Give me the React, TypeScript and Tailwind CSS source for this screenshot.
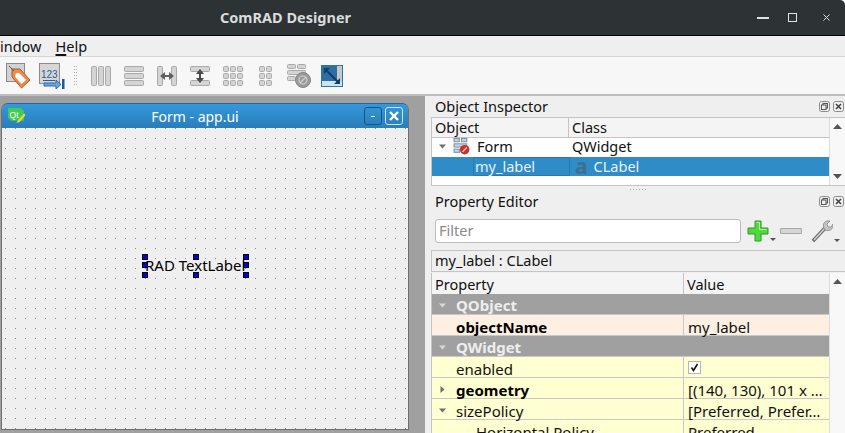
import type { ReactNode } from 'react';

const GREY = { fill: '#d4d4d4', stroke: '#a9a9a9' };

function Bar({ x, y, w, h }: { x: number; y: number; w: number; h: number }) {
  return <rect x={x + 0.5} y={y + 0.5} width={w - 1} height={h - 1} rx="1" fill={GREY.fill} stroke={GREY.stroke} />;
}

function Icon({ w = 24, h = 24, children }: { w?: number; h?: number; children: ReactNode }) {
  return (
    <svg width={w} height={h} viewBox={`0 0 ${w} ${h}`} className="block">
      {children}
    </svg>
  );
}

function TagIcon() {
  return (
    <Icon w={26} h={26}>
      <rect x="0.5" y="0.5" width="18" height="18" fill="#d2d2d2" stroke="#8a8a8a" />
      <path d="M6 6 L14 6 L24 17 L15.5 25 L6 14 Z" fill="#ee8a4a" stroke="#a85a2a" />
      <path d="M10 10 L13 10 L20 17 L15.5 21 L9 13.500 Z" fill="#fff" />
      <path d="M3 3 L8 8" stroke="#555" fill="none" />
    </Icon>
  );
}

function TabOrderIcon() {
  return (
    <Icon w={26} h={26}>
      <rect x="0.5" y="0.5" width="20" height="20" fill="#d6d6d6" stroke="#8c8c8c" />
      <text x="2" y="15" fontSize="10" fontFamily="Liberation Sans, sans-serif" fill="#2a5d9c">123</text>
      <path d="M4 17.5h12" stroke="#2a5d9c" fill="none" />
      <path d="M5 20h12v-3l5 4.500-5 4.500v-3H5z" fill="#6ea6dc" stroke="#2a6aa8" />
      <rect x="23" y="16" width="2.500" height="10" fill="#1e5a96" />
    </Icon>
  );
}

function ColumnsIcon() {
  return (
    <Icon w={20} h={20}>
      <Bar x={0} y={0} w={6} h={20} />
      <Bar x={7} y={0} w={6} h={20} />
      <Bar x={14} y={0} w={6} h={20} />
    </Icon>
  );
}

function RowsIcon() {
  return (
    <Icon w={20} h={20}>
      <Bar x={0} y={0} w={20} h={6} />
      <Bar x={0} y={7} w={20} h={6} />
      <Bar x={0} y={14} w={20} h={6} />
    </Icon>
  );
}

function SplitHIcon() {
  return (
    <Icon w={20} h={20}>
      <Bar x={0} y={0} w={6} h={20} />
      <Bar x={14} y={0} w={6} h={20} />
      <path d="M3 10l5-4v3h4V6l5 4-5 4v-3H8v3z" fill="#5e5e5e" />
    </Icon>
  );
}

function SplitVIcon() {
  return (
    <Icon w={20} h={20}>
      <Bar x={0} y={0} w={20} h={6} />
      <Bar x={0} y={14} w={20} h={6} />
      <path d="M10 3l4 5h-3v4h3l-4 5-4-5h3V8H6z" fill="#4a4a4a" />
    </Icon>
  );
}

function GridIcon({ cols }: { cols: number }) {
  const xs = Array.from({ length: cols }, (_, i) => i * 7);
  return (
    <Icon w={cols * 7 - 1} h={20}>
      {[0, 7, 14].map((y) => xs.map((x) => <Bar key={`${x}-${y}`} x={x} y={y} w={6} h={6} />))}
    </Icon>
  );
}

function BreakIcon() {
  return (
    <Icon w={24} h={24}>
      <Bar x={0} y={0} w={9} h={5} />
      <Bar x={10} y={0} w={9} h={5} />
      <Bar x={0} y={6} w={19} h={5} />
      <Bar x={0} y={12} w={9} h={5} />
      <circle cx="16" cy="16" r="7.500" fill="#9a9a9a" stroke="#858585" />
      <circle cx="16" cy="16" r="4" fill="none" stroke="#cfcfcf" strokeWidth="1.200" />
      <path d="M13 19l6-6" stroke="#cfcfcf" strokeWidth="1.200" />
    </Icon>
  );
}

function AdjustIcon() {
  return (
    <Icon w={22} h={22}>
      <rect x="0.500" y="0.500" width="21" height="21" fill="#9fc4dc" stroke="#2f74ad" />
      <rect x="1" y="1" width="15" height="15" fill="#2f6f9f" />
      <rect x="16" y="1" width="5" height="15" fill="#c8c8c8" />
      <rect x="1" y="16" width="20" height="5" fill="#cfe3ee" />
      <path d="M4 4l14 14" stroke="#0b3f6e" strokeWidth="2" />
      <path d="M3 3h6l-6 6zM19 19h-6l6-6z" fill="#0b3f6e" />
    </Icon>
  );
}

function TreeArrow({ open = true, light = false }: { open?: boolean; light?: boolean }) {
  const color = light ? '#d8d8d8' : '#6e6e6e';
  return (
    <svg width="7" height="7" viewBox="0 0 7 7" className="block">
      {open ? <path d="M0 1.500h7L3.500 5.500z" fill={color} /> : <path d="M1.500 0v7L5.500 3.500z" fill={color} />}
    </svg>
  );
}

function DockButtons() {
  return (
    <div className="flex gap-[3px]">
      <svg width="11" height="11" viewBox="0 0 11 11" className="block">
        <rect x="0.500" y="0.500" width="10" height="10" rx="2" fill="none" stroke="#8a8a8a" />
        <rect x="4" y="2.500" width="4.500" height="4.500" fill="none" stroke="#555" />
        <rect x="2.500" y="4" width="4.500" height="4.500" fill="#efefef" stroke="#555" />
      </svg>
      <svg width="11" height="11" viewBox="0 0 11 11" className="block">
        <rect x="0.500" y="0.500" width="10" height="10" rx="2" fill="none" stroke="#8a8a8a" />
        <path d="M3 3l5 5M8 3l-5 5" stroke="#444" strokeWidth="1.600" />
      </svg>
    </div>
  );
}

function ScrollArrow({ up }: { up: boolean }) {
  return (
    <svg width="9" height="5" viewBox="0 0 9 5" className="block">
      <path d={up ? 'M0 5h9L4.500 0z' : 'M0 0h9L4.500 5z'} fill="#555" />
    </svg>
  );
}

function SmallCaret() {
  return (
    <svg width="6" height="3" viewBox="0 0 6 3" className="block">
      <path d="M0 0h6L3 3z" fill="#555" />
    </svg>
  );
}

type Row = {
  name: string;
  value?: ReactNode;
  kind: 'group' | 'orange' | 'yellow';
  bold?: boolean;
  arrow?: 'open' | 'closed';
  indent?: boolean;
};

const rows: Row[] = [
  { name: 'QObject', kind: 'group', arrow: 'open' },
  { name: 'objectName', value: 'my_label', kind: 'orange', bold: true },
  { name: 'QWidget', kind: 'group', arrow: 'open' },
  {
    name: 'enabled',
    kind: 'yellow',
    value: (
      <span className="flex h-[13px] w-[13px] items-center justify-center border border-[#b5b5b5] bg-white">
        <svg width="9" height="9" viewBox="0 0 9 9">
          <path d="M1.500 4.500l2 3 4-6.500" stroke="#111" strokeWidth="1.600" fill="none" />
        </svg>
      </span>
    ),
  },
  { name: 'geometry', value: '[(140, 130), 101 x …', kind: 'yellow', bold: true, arrow: 'closed' },
  { name: 'sizePolicy', value: '[Preferred, Prefer…', kind: 'yellow', arrow: 'open' },
  { name: 'Horizontal Policy', value: 'Preferred', kind: 'yellow', indent: true },
];

function PropertyRow({ row }: { row: Row }) {
  const group = row.kind === 'group';
  const bg = group ? 'bg-[#a0a0a0]' : row.kind === 'orange' ? 'bg-[#fdf0e3]' : 'bg-[#ffffd2]';
  return (
    <div className={`flex h-[21px] shrink-0 items-center border-b border-[#c8c8c8] text-[15px] ${bg}`}>
      <div className={`flex h-full w-[252px] items-center ${group ? '' : 'border-r border-[#c8c8c8]'}`}>
        <span className="flex w-[24px] shrink-0 justify-center pt-[2px] pr-[3px]">
          {row.arrow && <TreeArrow open={row.arrow === 'open'} light={group} />}
        </span>
        <span
          className={`${group ? 'pt-[3px] font-bold text-[#eeeeee]' : row.bold ? 'pt-[4px] font-bold text-black' : 'pt-[4px] text-[#111]'} ${row.indent ? 'pl-[20px]' : ''}`}
        >
          {row.name}
        </span>
      </div>
      <div className={`flex items-center pl-[4px] text-[#111] ${typeof row.value === 'string' ? 'pt-[4px]' : ''}`}>{row.value}</div>
    </div>
  );
}

const handles = [
  [140, 126],
  [140, 134],
  [140, 144],
  [191, 126],
  [191, 144],
  [241, 126],
  [241, 134],
  [241, 144],
];

function FormWindow() {
  return (
    <div className="flex h-[327px] w-[408px] flex-col overflow-hidden rounded-t-[7px] border border-[#6f6f6f] border-t-[#1d6aa5]">
      <div className="relative flex h-[24px] shrink-0 items-center justify-center bg-linear-to-b from-[#3498da] to-[#2a7db8] pt-[2px] pr-[20px] text-[14px] text-white">
        <span className="absolute top-[3px] left-[6px]">
          <svg width="17" height="17" viewBox="0 0 16 16" className="block">
            <path d="M0 1h12l3 3v9H3l-3-3z" fill="#41cd52" />
            <text x="1.500" y="10" fontSize="8" fontFamily="Liberation Sans, sans-serif" fill="#fff">Qt</text>
            <path d="M15 6l-6 7-1 2 3-1 6-7z" fill="#e8d44a" />
          </svg>
        </span>
        Form - app.ui
        <div className="absolute top-[3px] right-[5px] flex gap-[3px]">
          <span className="flex h-[18px] w-[18px] items-center justify-center rounded-[3px] border border-[#17557f]">
            <span className="h-px w-[4px] bg-white" />
          </span>
          <span className="flex h-[18px] w-[18px] items-center justify-center rounded-[3px] border border-[#cfe3f0]">
            <svg width="10" height="10" viewBox="0 0 10 10">
              <path d="M1 1l8 8M9 1l-8 8" stroke="#fff" strokeWidth="2.400" />
            </svg>
          </span>
        </div>
      </div>
      <div className="relative flex-1 bg-[#efefef] bg-[radial-gradient(circle_at_0.5px_0.5px,#8a8a8a_0.5px,transparent_0.7px)] bg-size-[10px_10px] bg-position-[3px_0px]">
        <span className="absolute top-[130px] left-[143px] text-[15px] whitespace-nowrap text-black">RAD TextLabel</span>
        {handles.map(([x, y]) => (
          <span
            key={`${x}-${y}`}
            className="absolute h-[6px] w-[6px] border border-black bg-[#0000e0]"
            style={{ left: x, top: y }}
          />
        ))}
      </div>
    </div>
  );
}

export default function App() {
  return (
    <div className="flex h-[433px] w-[845px] flex-col overflow-hidden bg-white font-['Noto_Sans',sans-serif] text-[14.500px] leading-none text-[#111]">
      {/* Title bar */}
      <header className="flex h-[36px] shrink-0 items-center rounded-tr-[5px] border-b border-black bg-[#2d3235] text-[#d9dcdd]">
        <span className="ml-[220px] text-[14.500px] font-bold">ComRAD Designer</span>
        <div className="ml-auto flex items-center">
          <span className="mr-[19px] h-[2px] w-[12px] bg-[#dfe1e2]" />
          <span className="mr-[26px] h-[9px] w-[9px] border border-[#dfe1e2]" />
          <svg width="7" height="7" viewBox="0 0 7 7" className="mr-[15px] block">
            <path d="M0.500 0.500l6 6M6.500 0.500l-6 6" stroke="#dfe1e2" />
          </svg>
        </div>
      </header>

      {/* Menu bar */}
      <nav className="flex h-[21px] shrink-0 items-center gap-[14px] border-b border-[#d6d6d6] bg-[#efefef]">
        <span>indow</span>
        <span>
          <span className="underline decoration-[1.500px] underline-offset-2">H</span>elp
        </span>
      </nav>

      {/* Tool bar */}
      <div className="flex h-[39px] shrink-0 items-center border-b-2 border-[#bdbdbd] bg-[#f7f7f7] pt-[1px] pl-[2px]">
        <div className="flex w-[33px] justify-center"><TagIcon /></div>
        <div className="flex w-[33px] justify-center"><TabOrderIcon /></div>
        <div className="flex w-[16px] justify-center">
          <span className="h-[20px] w-[4px] bg-[radial-gradient(circle_at_0.5px_0.5px,#aaa_0.5px,transparent_0.7px)] bg-size-[2px_3px]" />
        </div>
        <div className="flex w-[33px] justify-center"><ColumnsIcon /></div>
        <div className="flex w-[33px] justify-center"><RowsIcon /></div>
        <div className="flex w-[33px] justify-center"><SplitHIcon /></div>
        <div className="flex w-[33px] justify-center"><SplitVIcon /></div>
        <div className="flex w-[33px] justify-center"><GridIcon cols={3} /></div>
        <div className="flex w-[33px] justify-center"><GridIcon cols={2} /></div>
        <div className="flex w-[33px] justify-center"><BreakIcon /></div>
        <div className="flex w-[33px] justify-center"><AdjustIcon /></div>
      </div>

      <main className="flex min-h-0 flex-1">
        {/* MDI area */}
        <section className="w-[425px] shrink-0 bg-[#a0a0a0] pt-[7px] pl-px">
          <FormWindow />
        </section>

        {/* Docks */}
        <aside className="flex min-w-0 flex-1 flex-col bg-[#efefef] pl-[6px]">
          <div className="flex h-[21px] shrink-0 items-center justify-between pr-[1px] pl-[4px]">
            <span>Object Inspector</span>
            <DockButtons />
          </div>

          <div className="flex h-[69px] shrink-0 border border-r-0 border-[#c4c4c4] bg-white">
            <div className="min-w-0 flex-1">
              <div className="flex h-[20px] items-center border-b border-[#c4c4c4] bg-[#f4f4f4]">
                <span className="flex h-full w-[137px] items-center border-r border-[#c4c4c4] pl-[3px]">Object</span>
                <span className="pl-[3px]">Class</span>
              </div>
              <div className="flex h-[19px] items-center pb-[2px]">
                <span className="flex w-[137px] items-center">
                  <span className="flex w-[21px] justify-center"><TreeArrow /></span>
                  <svg width="18" height="17" viewBox="0 0 16 16" className="mr-[6px] block">
                    <rect x="0.500" y="0.500" width="5" height="3" fill="#c6d6e4" stroke="#7f93a6" />
                    <rect x="7.500" y="0.500" width="5" height="3" fill="#c6d6e4" stroke="#7f93a6" />
                    <rect x="0.500" y="5.500" width="12" height="3" fill="#c6d6e4" stroke="#7f93a6" />
                    <rect x="0.500" y="10.500" width="5" height="3" fill="#c6d6e4" stroke="#7f93a6" />
                    <circle cx="10.500" cy="11" r="4.500" fill="#c8342c" />
                    <path d="M8.500 13l4-4" stroke="#f3d0cc" strokeWidth="1.200" />
                  </svg>
                  Form
                </span>
                <span className="pl-[3px]">QWidget</span>
              </div>
              <div className="flex h-[19px] items-center bg-[#308cc6] text-[#e8f2f8]">
                <span className="ml-[41px] flex h-full w-[97px] items-center border border-[#2a79ac] pl-[1px]">my_label</span>
                <span className="flex items-center pl-[5px]">
                  <span className="mr-[6px] flex h-[15px] items-center text-[21px] font-bold text-[#3e6f8f]">a</span>
                  CLabel
                </span>
              </div>
            </div>
            <div className="flex w-[16px] shrink-0 flex-col items-center justify-between border-l border-[#dcdcdc] bg-[#f8f8f8] py-[6px]">
              <ScrollArrow up />
              <ScrollArrow up={false} />
            </div>
          </div>

          <div className="flex h-[7px] shrink-0 items-center justify-center">
            <span className="h-px w-[16px] bg-[radial-gradient(circle_at_0.5px_0.5px,#aaa_0.5px,transparent_0.7px)] bg-size-[3px_1px]" />
          </div>

          <div className="flex h-[25px] shrink-0 items-center justify-between pr-[1px] pb-[8px] pl-[4px]">
            <span>Property Editor</span>
            <DockButtons />
          </div>

          <div className="flex h-[26px] shrink-0 items-center pl-[4px]">
            <div className="flex h-[24px] w-[306px] items-center rounded-[3px] border border-[#bdbdbd] bg-white pb-[2px] pl-[3px] text-[#8a8a8a]">Filter</div>
            <div className="ml-[6px] flex items-end">
              <svg width="22" height="22" viewBox="0 0 22 22" className="block">
                <path d="M8 1h6v7h7v6h-7v7H8v-7H1V8h7z" fill="#4fd93a" stroke="#2a9a24" />
                <path d="M9.500 2.500h3v7h7" stroke="#b5f5a5" fill="none" />
              </svg>
              <span className="mb-[1px] ml-[1px]"><SmallCaret /></span>
            </div>
            <span className="ml-[4px] h-[6px] w-[22px] rounded-[1px] border border-[#a5a5a5] bg-[#d6d6d6]" />
            <div className="ml-[9px] flex items-end">
              <svg width="22" height="24" viewBox="0 0 22 24" className="block">
                <path d="M2 22L15 8" stroke="#666" strokeWidth="3.500" />
                <path d="M3 21L15 8" stroke="#d4d4d4" strokeWidth="1.500" />
                <path d="M13 9c-2-4 1-8 6-7l-3 3 1 3 3 0 2-3c1 5-4 8-8 6z" fill="#c4c4c4" stroke="#858585" strokeWidth="0.800" />
              </svg>
              <span className="mb-[1px] ml-[1px]"><SmallCaret /></span>
            </div>
          </div>

          <div className="mt-[6px] flex h-[22px] shrink-0 items-center border border-r-0 border-[#c4c4c4] pb-[2px] pl-[3px]">my_label : CLabel</div>

          <div className="mt-[1px] flex min-h-0 flex-1 border-l border-[#c4c4c4] bg-white">
            <div className="min-w-0 flex-1 overflow-hidden">
              <div className="flex h-[21px] items-center bg-[#f4f4f4]">
                <span className="flex h-full w-[252px] items-center border-r border-[#c4c4c4] pt-[2px] pl-[3px]">Property</span>
                <span className="pt-[2px] pl-[3px]">Value</span>
              </div>
              {rows.map((row) => (
                <PropertyRow key={row.name} row={row} />
              ))}
            </div>
            <div className="flex w-[16px] shrink-0 justify-center border-l border-[#dcdcdc] bg-[#f8f8f8] pt-[6px]">
              <ScrollArrow up />
            </div>
          </div>
        </aside>
      </main>
    </div>
  );
}
